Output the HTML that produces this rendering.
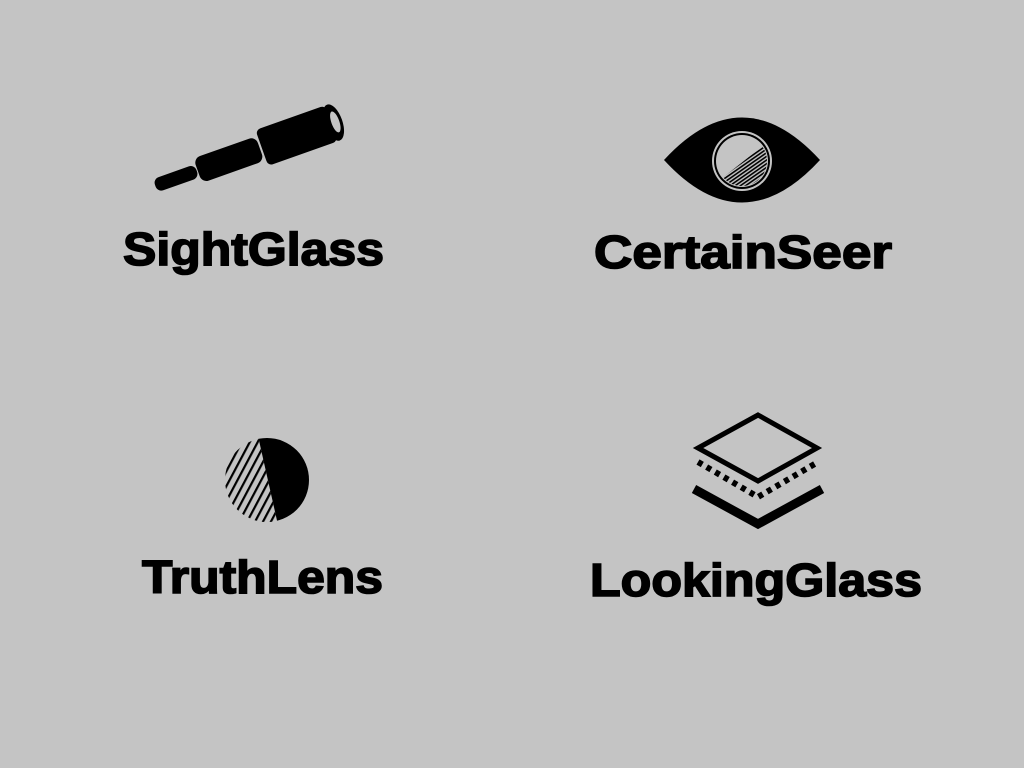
<!DOCTYPE html>
<html><head><style>
html,body{margin:0;padding:0;background:#c4c4c4;width:1024px;height:768px;overflow:hidden}
</style></head><body>
<svg width="1024" height="768" viewBox="0 0 1024 768" xmlns="http://www.w3.org/2000/svg">
<defs>
<pattern id="h1" width="3" height="3" patternUnits="userSpaceOnUse" patternTransform="rotate(-35)">
<rect width="3" height="1.6" fill="#000"/></pattern>
<pattern id="h2" width="7" height="7" patternUnits="userSpaceOnUse" patternTransform="rotate(-62)">
<rect width="7" height="2.2" fill="#000"/></pattern>
<clipPath id="lc"><circle cx="267" cy="480" r="42"/></clipPath>
<clipPath id="ic"><circle cx="742" cy="161" r="25"/></clipPath>
</defs>
<!-- telescope -->
<g transform="translate(160,184) rotate(-19.5)">
<rect x="-5" y="-7" width="44" height="14" rx="6" fill="#000"/>
<rect x="40" y="-13" width="66" height="26" rx="7" fill="#000"/>
<rect x="108" y="-19" width="74" height="38" rx="5" fill="#000"/>
<ellipse cx="184" cy="0" rx="9" ry="19" fill="#000"/>
<ellipse cx="186" cy="0" rx="4" ry="11" fill="#c4c4c4"/>
</g>
<!-- eye -->
<path d="M664,160 Q742,75 820,160 Q742,245 664,160 Z" fill="#000"/>
<circle cx="742" cy="161" r="30" fill="#c4c4c4"/>
<circle cx="742" cy="161" r="28" fill="#000"/>
<circle cx="742" cy="161" r="26" fill="#c4c4c4"/>
<g clip-path="url(#ic)"><polygon points="712,186 768,142 775,200 712,200" fill="url(#h1)"/></g>
<!-- lens -->
<g clip-path="url(#lc)">
<polygon points="220,430 258,436 278,525 220,525" fill="url(#h2)"/>
<polygon points="258,436 320,436 320,525 278,525" fill="#000"/>
</g>
<!-- layers -->
<polygon points="758,415 817,448 758,481 698,448" fill="none" stroke="#000" stroke-width="5"/>
<polyline points="698,462 758,497 818,462" fill="none" stroke="#000" stroke-width="6" stroke-dasharray="5,5"/>
<polyline points="694,489 758,524 822,489" fill="none" stroke="#000" stroke-width="9"/>
<g font-family="Liberation Sans, sans-serif" font-weight="bold" fill="#000" stroke="#000" stroke-width="1.6" font-size="46">
<text x="123" y="265" textLength="261" lengthAdjust="spacingAndGlyphs">SightGlass</text>
<text x="594" y="268" textLength="298" lengthAdjust="spacingAndGlyphs">CertainSeer</text>
<text x="142" y="593" textLength="241" lengthAdjust="spacingAndGlyphs">TruthLens</text>
<text x="590" y="596" textLength="332" lengthAdjust="spacingAndGlyphs">LookingGlass</text>
</g>
</svg>
</body></html>
